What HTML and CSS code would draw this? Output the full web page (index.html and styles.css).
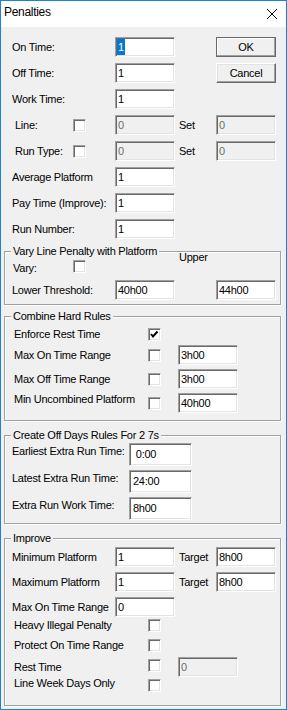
FILE: index.html
```html
<!DOCTYPE html>
<html lang="en">
<head>
  <meta charset="UTF-8">
  <title>Penalties</title>
  <link rel="stylesheet" href="styles.css">
</head>
<body>

  <div class="window">
    <div class="titlebar">
      <span class="title">Penalties</span>
      <svg class="close" width="10" height="10" viewBox="0 0 10 10"><path d="M0 0L10 10M10 0L0 10" stroke="#000" stroke-width="1" shape-rendering="crispEdges"/></svg>
    </div>

    <div class="dialog">
      <div class="form">
        <span class="lbl span2">On Time:</span>
        <div class="edit c3"><span class="sel">1</span></div>
        <button class="btn default c5">OK</button>

        <span class="lbl span2">Off Time:</span>
        <div class="edit c3">1</div>
        <button class="btn c5">Cancel</button>

        <span class="lbl span2">Work Time:</span>
        <div class="edit c3">1</div>

        <span class="lbl c1 indent">Line:</span>
        <span class="cb c2"></span>
        <div class="edit off c3">0</div>
        <span class="lbl set c4">Set</span>
        <div class="edit off c5">0</div>

        <span class="lbl c1 indent">Run Type:</span>
        <span class="cb c2"></span>
        <div class="edit off c3">0</div>
        <span class="lbl set c4">Set</span>
        <div class="edit off c5">0</div>

        <span class="lbl span2">Average Platform</span>
        <div class="edit c3">1</div>

        <span class="lbl span2">Pay Time (Improve):</span>
        <div class="edit c3">1</div>

        <span class="lbl span2">Run Number:</span>
        <div class="edit c3">1</div>
      </div>

      <!-- vary line penalty -->
      <div class="group g-vary">
        <div class="group-title split">
          <span class="legend">Vary Line Penalty with Platform</span>
          <span class="upper">Upper</span>
        </div>
        <div class="vary-grid">
          <span class="lbl c1 bottom pad1">Vary:</span>
          <span class="cb c2 bottom"></span>
          <span class="lbl span2">Lower Threshold:</span>
          <div class="edit c3">40h00</div>
          <div class="edit c5">44h00</div>
        </div>
      </div>

      <!-- combine hard rules -->
      <div class="group g-rules">
        <div class="group-title"><span class="legend">Combine Hard Rules</span></div>
        <div class="rules-grid">
          <span class="lbl c1 pad2">Enforce Rest Time</span>
          <span class="cb c2 checked"><svg width="11" height="11" viewBox="0 0 11 11"><polyline points="2,5 4,7.5 8.5,2.5" fill="none" stroke="#000" stroke-width="2"/></svg></span>

          <span class="lbl c1 pad2">Max On Time Range</span>
          <span class="cb c2"></span>
          <div class="edit c3">3h00</div>

          <span class="lbl c1 pad2">Max Off Time Range</span>
          <span class="cb c2"></span>
          <div class="edit c3">3h00</div>

          <span class="lbl c1 pad2 top">Min Uncombined Platform</span>
          <span class="cb c2 top1"></span>
          <div class="edit c3">40h00</div>
        </div>
      </div>

      <!-- off days -->
      <div class="group g-days">
        <div class="group-title"><span class="legend">Create Off Days Rules For 2 7s</span></div>
        <div class="days-grid">
          <span class="lbl c1 top2">Earliest Extra Run Time:</span>
          <div class="edit tall">&nbsp;0:00</div>

          <span class="lbl c1 top2">Latest Extra Run Time:</span>
          <div class="edit tall">24:00</div>

          <span class="lbl c1 top2">Extra Run Work Time:</span>
          <div class="edit tall">8h00</div>
        </div>
      </div>

      <!-- improve -->
      <div class="group g-improve">
        <div class="group-title"><span class="legend">Improve</span></div>
        <div class="improve-grid">
          <span class="lbl span2">Minimum Platform</span>
          <div class="edit c3">1</div>
          <span class="lbl set c4">Target</span>
          <div class="edit c5">8h00</div>

          <span class="lbl span2">Maximum Platform</span>
          <div class="edit c3">1</div>
          <span class="lbl set c4">Target</span>
          <div class="edit c5">8h00</div>

          <span class="lbl span2">Max On Time Range</span>
          <div class="edit c3">0</div>
        </div>
        <div class="checks-grid">
          <span class="lbl c1 pad2">Heavy Illegal Penalty</span>
          <span class="cb c2"></span>

          <span class="lbl c1 pad2">Protect On Time Range</span>
          <span class="cb c2"></span>

          <span class="lbl c1 pad2 bottom">Rest Time</span>
          <span class="cb c2 top"></span>
          <div class="edit off c3 top">0</div>

          <span class="lbl c1 pad2 top">Line Week Days Only</span>
          <span class="cb c2 top"></span>
        </div>
      </div>
    </div>
  </div>

</body>
</html>
```

FILE: styles.css
```css
body {
  margin: 0;
  font-family: "Liberation Sans", Arial, sans-serif;
  font-size: 11px;
  letter-spacing: -0.25px;
  color: #000;
  background: #fff;
}

.window {
  width: 287px;
  height: 710px;
  box-sizing: border-box;
  border: 1px solid #1883d7;
  background: #f0f0f0;
  display: flex;
  flex-direction: column;
}

.titlebar {
  height: 26px;
  flex: 0 0 26px;
  box-sizing: border-box;
  background: #fff;
  display: flex;
  align-items: flex-start;
  padding: 4px 0 0 3px;
  font-size: 12px;
  line-height: 15px;
  letter-spacing: -0.3px;
}

.close {
  display: block;
  margin: 4px 9px 0 auto;
}

.dialog {
  padding-top: 10px;
}

/* controls */

.lbl {
  white-space: nowrap;
  align-self: center;
  line-height: 13px;
}

.indent { padding-left: 3px; }
.set { padding-left: 4px; }
.pad1 { padding-left: 1px; }
.pad2 { padding-left: 2px; }

.span2 { grid-column: 1 / 3; }
.c1 { grid-column: 1; }
.c2 { grid-column: 2; }
.c3 { grid-column: 3; }
.c4 { grid-column: 4; }
.c5 { grid-column: 5; }

.top { align-self: start; }
.top1 { align-self: start; margin-top: 1px; }
.top2 { align-self: start; margin-top: 2px; }
.bottom { align-self: end; }

.edit {
  height: 20px;
  box-sizing: border-box;
  border: 1px solid;
  border-color: #a0a0a0 #fff #fff #a0a0a0;
  box-shadow: inset 1px 1px 0 #696969, inset -1px -1px 0 #e3e3e3;
  background: #fff;
  padding: 0 2px;
  line-height: 18px;
  white-space: nowrap;
  overflow: hidden;
}

.edit.off {
  background: #f0f0f0;
  color: #6d6d6d;
}

.edit.tall {
  height: 23px;
  line-height: 21px;
  padding-left: 3px;
}

.sel {
  display: inline-block;
  background: #0078d7;
  color: #fff;
  line-height: 16px;
  padding: 0 1px;
  margin-left: -1px;
}

.cb {
  width: 13px;
  height: 13px;
  box-sizing: border-box;
  border: 1px solid;
  border-color: #a0a0a0 #fff #fff #a0a0a0;
  box-shadow: inset 1px 1px 0 #696969, inset -1px -1px 0 #e3e3e3;
  background: #fff;
  align-self: center;
  justify-self: start;
}

.cb svg {
  display: block;
}

.btn {
  font: inherit;
  letter-spacing: inherit;
  color: #000;
  width: 60px;
  height: 20px;
  padding: 0;
  background: #f0f0f0;
  border: 1px solid;
  border-color: #fff #696969 #696969 #fff;
  box-shadow: inset -1px -1px 0 #a0a0a0, inset 1px 1px 0 #e3e3e3;
}

.btn.default {
  border-color: #696969;
  box-shadow: inset -1px -1px 0 #a0a0a0, inset 1px 1px 0 #fff;
}

/* top block */

.form {
  display: grid;
  grid-template-columns: 61px 42px 60px 41px 60px;
  grid-auto-rows: 20px;
  row-gap: 6px;
  margin-left: 11px;
}

/* group boxes */

.group {
  margin: 0 5px 0 3px;
  border: 1px solid #a0a0a0;
  box-shadow: inset 1px 1px 0 #fff, 1px 1px 0 #fff;
  padding-left: 7px;
}

.group-title {
  display: flex;
  height: 13px;
  line-height: 13px;
  margin: -7px 0 0 -1px;
}

.legend {
  background: #f0f0f0;
  padding: 0 2px;
  white-space: nowrap;
}

.group-title.split {
  display: grid;
  grid-template-columns: 168px auto;
  align-items: start;
}

.group-title.split .legend {
  justify-self: start;
}

.upper {
  margin-top: 6px;
}

.g-vary {
  margin-top: 12px;
  padding-bottom: 4px;
}

.vary-grid {
  display: grid;
  grid-template-columns: 61px 42px 60px 41px 60px;
  grid-template-rows: 17px 20px;
  row-gap: 5px;
}

.g-rules {
  margin-top: 11px;
  padding-bottom: 7px;
}

.rules-grid {
  display: grid;
  grid-template-columns: 136px 30px 60px;
  grid-template-rows: 13px 20px 20px 20px;
  row-gap: 4px;
  margin-top: 5px;
}

.g-days {
  margin-top: 14px;
  padding-bottom: 3px;
}

.days-grid {
  display: grid;
  grid-template-columns: 117px 63px;
  grid-auto-rows: 23px;
  row-gap: 4px;
  margin-top: 1px;
}

.g-improve {
  margin-top: 14px;
  padding-bottom: 12px;
}

.improve-grid {
  display: grid;
  grid-template-columns: 61px 42px 60px 41px 60px;
  grid-auto-rows: 20px;
  row-gap: 5px;
  margin-top: 2px;
}

.checks-grid {
  display: grid;
  grid-template-columns: 136px 30px 60px;
  grid-template-rows: 17px 17px 17px 16px;
  row-gap: 3px;
}
```
